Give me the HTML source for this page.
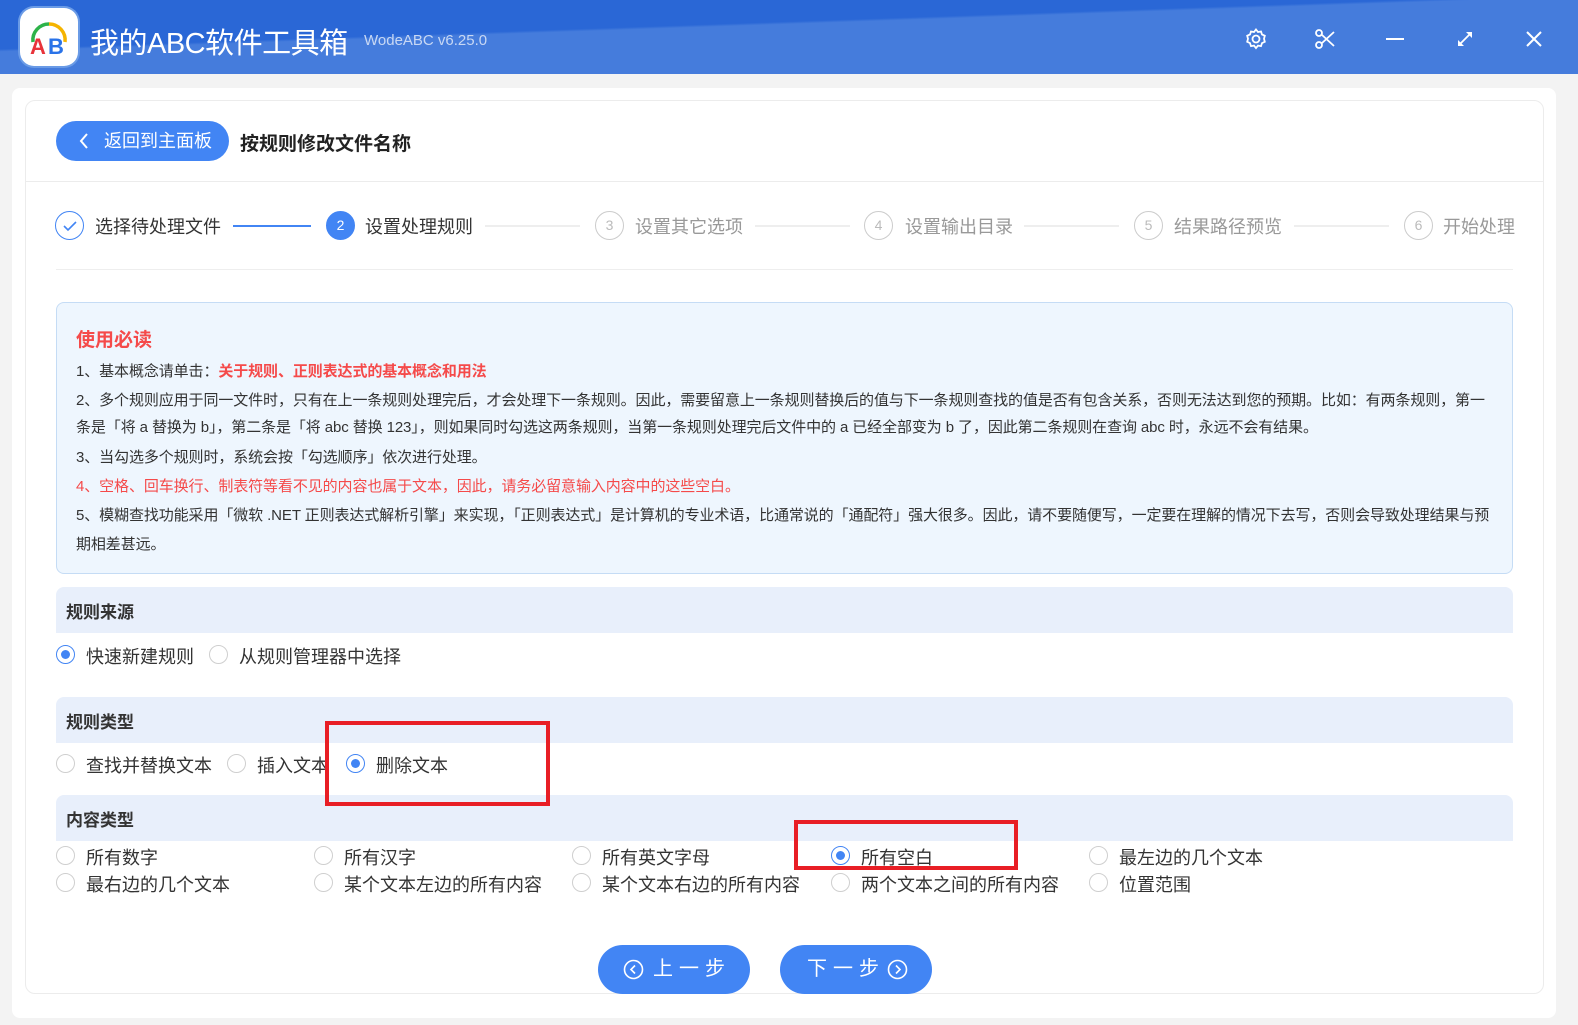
<!DOCTYPE html>
<html><head><meta charset="utf-8"><style>
*{margin:0;padding:0;box-sizing:border-box}
body{width:1578px;height:1025px;background:#f3f3f3;font-family:"Liberation Sans","Noto Sans CJK SC",sans-serif;position:relative;overflow:hidden;color:#333}
.a{position:absolute;white-space:nowrap}
.hdr{position:absolute;left:0;top:0;width:1578px;height:74px;background:linear-gradient(178deg,#2a67d6 0 38%,#457cdc 40%)}
.radio{position:absolute;width:19px;height:19px;border:1px solid #cfcfcf;border-radius:50%;background:#fff}
.radio.on{border-color:#4285f4}
.radio.on::after{content:"";position:absolute;left:4px;top:4px;width:9px;height:9px;border-radius:50%;background:#4285f4}
.lbl{font-size:18px;color:#333}
.sec{position:absolute;left:56px;width:1457px;height:46px;background:#e8effb;border-radius:8px 8px 0 0}
.sec span{position:absolute;left:10px;top:11px;font-size:17px;font-weight:bold;color:#333}
.step{position:absolute;top:211px;width:29px;height:29px;border:1px solid #ccc;border-radius:50%;text-align:center;line-height:27px;font-size:14px;color:#bbb}
.st{font-size:18px;color:#999;top:213px}
.ln{position:absolute;top:225px;height:2px;background:#eee}
.nt{font-size:15px;color:#333;left:76px;letter-spacing:-0.1px}
.btn{position:absolute;top:945px;width:152px;height:49px;border-radius:25px;background:#4285f4;color:#fff;font-size:20px;letter-spacing:6px;line-height:49px}
.red{position:absolute;border:4px solid #e81e25}
</style></head><body>
<div class="hdr"></div>
<div class="a" style="left:20px;top:8px;width:58px;height:58px;border-radius:14px;background:#fff;box-shadow:0 0 0 2px #6a9be6"></div>
<svg class="a" style="left:24px;top:12px" width="50" height="50" viewBox="0 0 50 50"><path d="M9 30 A16 16 0 0 1 25 12" stroke="#2db34a" stroke-width="3.5" fill="none"/><path d="M25 12 A16 16 0 0 1 41 30" stroke="#f5b400" stroke-width="3.5" fill="none"/><text x="6" y="42" font-size="22" font-weight="bold" fill="#e8333a" font-family="Liberation Sans">A</text><text x="24" y="42" font-size="22" font-weight="bold" fill="#2a73e8" font-family="Liberation Sans">B</text></svg>
<div class="a" style="left:90px;top:20px;font-size:29px;color:#fff;letter-spacing:-0.5px">我的ABC软件工具箱</div>
<div class="a" style="left:364px;top:32px;font-size:15px;color:#c8d8f4">WodeABC v6.25.0</div>
<svg class="a" style="left:1244px;top:27px" width="24" height="24" viewBox="0 0 24 24" fill="none" stroke="#fff" stroke-width="1.8"><circle cx="12" cy="12" r="3.5"/><path d="M12 2.5l2 2.5 3-.5 1 3 2.8 1.3-.8 3 .8 3-2.8 1.3-1 3-3-.5-2 2.5-2-2.5-3 .5-1-3-2.8-1.3.8-3-.8-3L6 7.5l1-3 3 .5z"/></svg>
<svg class="a" style="left:1314px;top:28px" width="22" height="22" viewBox="0 0 22 22" fill="none" stroke="#fff" stroke-width="1.8"><circle cx="5" cy="5" r="3"/><circle cx="5" cy="17" r="3"/><path d="M7.5 6.5L20 18M7.5 15.5L20 4"/></svg>
<div class="a" style="left:1386px;top:38px;width:18px;height:2px;background:#fff"></div>
<svg class="a" style="left:1455px;top:29px" width="20" height="20" viewBox="0 0 20 20" fill="#fff" stroke="#fff" stroke-width="1.8"><path d="M4 16L16 4"/><path d="M11 3h6v6z" stroke="none"/><path d="M3 11v6h6z" stroke="none"/></svg>
<svg class="a" style="left:1525px;top:30px" width="18" height="18" viewBox="0 0 18 18" stroke="#fff" stroke-width="2"><path d="M2 2L16 16M16 2L2 16"/></svg>

<div class="a" style="left:12px;top:88px;width:1544px;height:930px;background:#fff;border-radius:8px"></div>
<div class="a" style="left:25px;top:100px;width:1519px;height:894px;background:#fff;border:1px solid #ececec;border-radius:10px"></div>
<div class="a" style="left:25px;top:181px;width:1519px;height:1px;background:#ececec"></div>
<div class="a" style="left:56px;top:121px;width:173px;height:40px;border-radius:20px;background:#4285f4;color:#fff;font-size:18px;line-height:40px;padding-left:48px">返回到主面板</div>
<svg class="a" style="left:78px;top:132px" width="12" height="18" viewBox="0 0 12 18" fill="none" stroke="#fff" stroke-width="2"><path d="M9 2L3 9l6 7"/></svg>
<div class="a" style="left:240px;top:129px;font-size:19px;font-weight:bold;color:#222">按规则修改文件名称</div>

<div class="step" style="left:55px;border-color:#4285f4"></div>
<svg class="a" style="left:62px;top:218px" width="16" height="16" viewBox="0 0 16 16" fill="none" stroke="#4285f4" stroke-width="1.6"><path d="M2 8l4 4 8-8"/></svg>
<div class="a st" style="left:95px;color:#333">选择待处理文件</div>
<div class="ln" style="left:233px;width:78px;background:#4285f4"></div>
<div class="step" style="left:326px;background:#4285f4;border-color:#4285f4;color:#fff">2</div>
<div class="a st" style="left:365px;color:#333">设置处理规则</div>
<div class="ln" style="left:485px;width:95px"></div>
<div class="step" style="left:595px">3</div><div class="a st" style="left:635px">设置其它选项</div>
<div class="ln" style="left:755px;width:95px"></div>
<div class="step" style="left:864px">4</div><div class="a st" style="left:905px">设置输出目录</div>
<div class="ln" style="left:1024px;width:95px"></div>
<div class="step" style="left:1134px">5</div><div class="a st" style="left:1174px">结果路径预览</div>
<div class="ln" style="left:1294px;width:95px"></div>
<div class="step" style="left:1404px">6</div><div class="a st" style="left:1443px">开始处理</div>
<div class="a" style="left:56px;top:269px;width:1457px;height:1px;background:#eee"></div>

<div class="a" style="left:56px;top:302px;width:1457px;height:272px;background:#eef6fe;border:1px solid #c5dcf5;border-radius:8px"></div>
<div class="a" style="left:76px;top:325px;font-size:19px;font-weight:bold;color:#f54a4a">使用必读</div>
<div class="a nt" style="top:360px">1、基本概念请单击：<b style="color:#f54a4a">关于规则、正则表达式的基本概念和用法</b></div>
<div class="a nt" style="top:389px">2、多个规则应用于同一文件时，只有在上一条规则处理完后，才会处理下一条规则。因此，需要留意上一条规则替换后的值与下一条规则查找的值是否有包含关系，否则无法达到您的预期。比如：有两条规则，第一</div>
<div class="a nt" style="top:416px">条是「将 a 替换为 b」，第二条是「将 abc 替换 123」，则如果同时勾选这两条规则，当第一条规则处理完后文件中的 a 已经全部变为 b 了，因此第二条规则在查询 abc 时，永远不会有结果。</div>
<div class="a nt" style="top:446px">3、当勾选多个规则时，系统会按「勾选顺序」依次进行处理。</div>
<div class="a nt" style="top:475px;color:#f54a4a">4、空格、回车换行、制表符等看不见的内容也属于文本，因此，请务必留意输入内容中的这些空白。</div>
<div class="a nt" style="top:504px">5、模糊查找功能采用「微软 .NET 正则表达式解析引擎」来实现，「正则表达式」是计算机的专业术语，比通常说的「通配符」强大很多。因此，请不要随便写，一定要在理解的情况下去写，否则会导致处理结果与预</div>
<div class="a nt" style="top:533px">期相差甚远。</div>

<div class="sec" style="top:587px"><span>规则来源</span></div>
<div class="radio on" style="left:56px;top:645px"></div><div class="a lbl" style="left:86px;top:643px">快速新建规则</div>
<div class="radio" style="left:209px;top:645px"></div><div class="a lbl" style="left:239px;top:643px">从规则管理器中选择</div>

<div class="sec" style="top:697px"><span>规则类型</span></div>
<div class="radio" style="left:56px;top:754px"></div><div class="a lbl" style="left:86px;top:752px">查找并替换文本</div>
<div class="radio" style="left:227px;top:754px"></div><div class="a lbl" style="left:257px;top:752px">插入文本</div>
<div class="radio on" style="left:346px;top:754px"></div><div class="a lbl" style="left:376px;top:752px">删除文本</div>

<div class="sec" style="top:795px"><span>内容类型</span></div>
<div class="radio" style="left:56px;top:846px"></div><div class="a lbl" style="left:86px;top:844px">所有数字</div>
<div class="radio" style="left:314px;top:846px"></div><div class="a lbl" style="left:344px;top:844px">所有汉字</div>
<div class="radio" style="left:572px;top:846px"></div><div class="a lbl" style="left:602px;top:844px">所有英文字母</div>
<div class="radio on" style="left:831px;top:846px"></div><div class="a lbl" style="left:861px;top:844px">所有空白</div>
<div class="radio" style="left:1089px;top:846px"></div><div class="a lbl" style="left:1119px;top:844px">最左边的几个文本</div>
<div class="radio" style="left:56px;top:873px"></div><div class="a lbl" style="left:86px;top:871px">最右边的几个文本</div>
<div class="radio" style="left:314px;top:873px"></div><div class="a lbl" style="left:344px;top:871px">某个文本左边的所有内容</div>
<div class="radio" style="left:572px;top:873px"></div><div class="a lbl" style="left:602px;top:871px">某个文本右边的所有内容</div>
<div class="radio" style="left:831px;top:873px"></div><div class="a lbl" style="left:861px;top:871px">两个文本之间的所有内容</div>
<div class="radio" style="left:1089px;top:873px"></div><div class="a lbl" style="left:1119px;top:871px">位置范围</div>

<div class="red" style="left:325px;top:721px;width:225px;height:85px"></div>
<div class="red" style="left:794px;top:820px;width:224px;height:50px"></div>

<div class="btn" style="left:598px;padding-left:55px">上一步</div>
<svg class="a" style="left:623px;top:959px" width="21" height="21" viewBox="0 0 21 21" fill="none" stroke="#fff" stroke-width="1.6"><circle cx="10.5" cy="10.5" r="9"/><path d="M12 6.5l-4 4 4 4"/></svg>
<div class="btn" style="left:780px;padding-left:27px">下一步</div>
<svg class="a" style="left:887px;top:959px" width="21" height="21" viewBox="0 0 21 21" fill="none" stroke="#fff" stroke-width="1.6"><circle cx="10.5" cy="10.5" r="9"/><path d="M9 6.5l4 4-4 4"/></svg>
</body></html>
